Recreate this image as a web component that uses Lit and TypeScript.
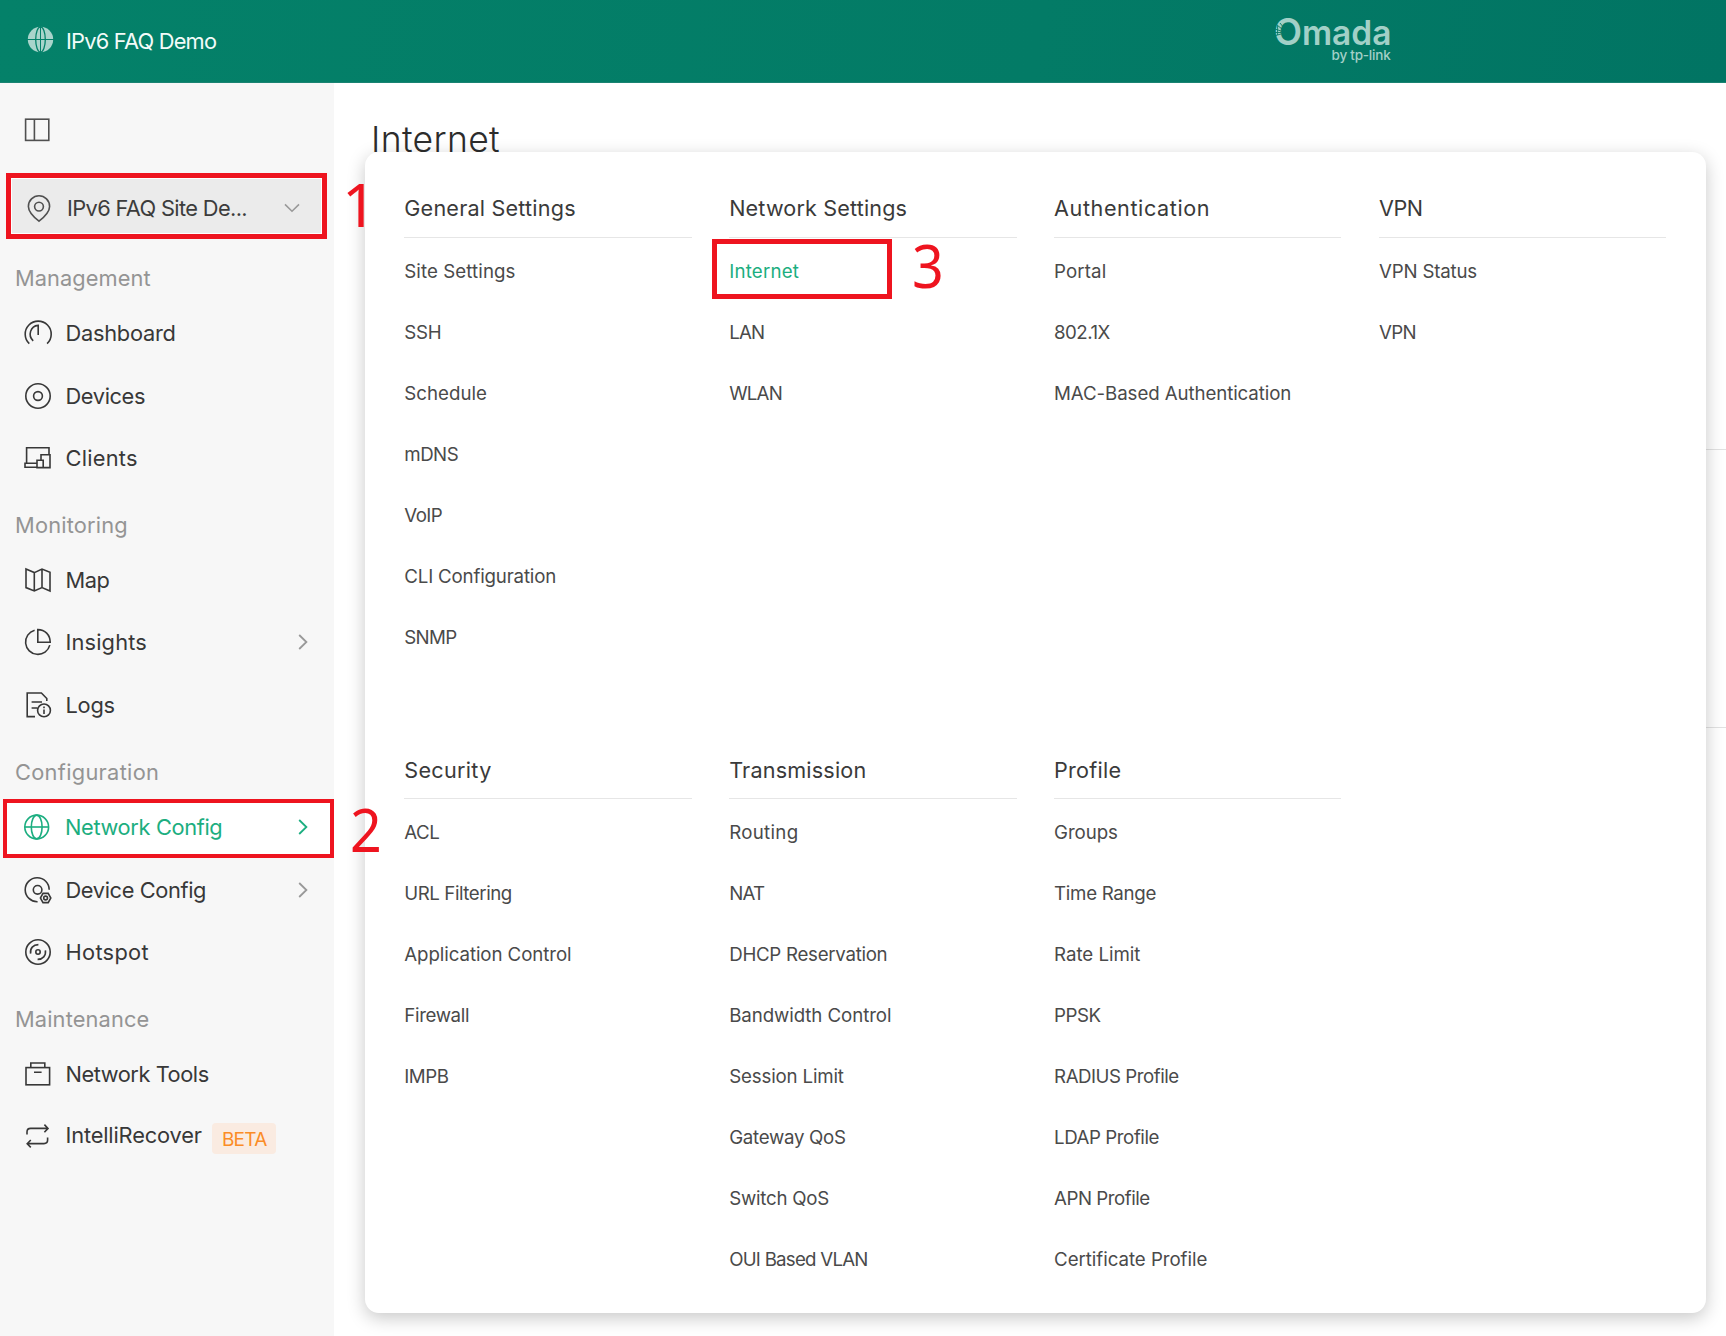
import { LitElement, html, svg, css, nothing } from "lit";
import { customElement, property } from "lit/decorators.js";
import { classMap } from "lit/directives/class-map.js";

// Icons share a 30x30 grid centred on (15, 15).
const ICONS: Record<string, unknown> = {
  panel: svg`<rect x="3.6" y="4.2" width="23.2" height="21.2"/><path d="M12.4 4.2v21.2"/>`,
  pin: svg`<path d="M15 28.2C10.5 24.6 4.4 19.4 4.4 13.4a10.6 10.6 0 0 1 21.2 0c0 6-6.1 11.2-10.6 14.8z"/><circle cx="15" cy="13.6" r="4.4"/>`,
  dashboard: svg`<path d="M6.3 25.6a13 13 0 1 1 17.8 0"/><path d="M10.2 22.8C4.5 17.5 7.3 8.1 15.2 7.4v9.6"/>`,
  devices: svg`<circle cx="15" cy="15" r="12.2"/><circle cx="15" cy="15" r="4.4"/>`,
  clients: svg`<path d="M26 11V4.8H3.6v15.5M13.8 20.3H2v4h12M14 24.6v-7.4h6.2v7.4zM18 17.2v-5.4h9v12.8h-6.8"/>`,
  map: svg`<path d="M3 4l8.3 3.6L19 4l8 3.3v18.8L19 22.6l-7.7 3.4L3 22.6zM11.3 7.6V26M19 4v18.6"/>`,
  insights: svg`<path d="M11.6 3.2a12.3 12.3 0 1 0 15.2 14.9"/><path d="M14.8 2.6c7.2 0 12.3 5.2 12.4 12.7H14.8z"/>`,
  logs: svg`<path d="M12 26.6H4.2V3h14.2l5.4 5.5v2.4M8.6 12H19M8.6 18h5.6"/><circle cx="21" cy="20.4" r="6.4"/><path d="M21 19.4v4.6M21 16.6v1.6"/>`,
  globe: svg`<circle cx="14.7" cy="15" r="11.9"/><ellipse cx="14.7" cy="15" rx="5.4" ry="11.9"/><path d="M2.8 15h23.8"/>`,
  deviceConfig: svg`<path d="M14.6 26.7A12 12 0 1 1 26.2 14.8"/><circle cx="14.6" cy="14.8" r="4.3"/><path d="M20 18.4h5.2l2.6 4.6-2.6 4.6H20L17.4 23z"/><circle cx="22.6" cy="23" r="1.9"/>`,
  hotspot: svg`<circle cx="15" cy="15" r="12.2"/><circle cx="15" cy="15" r="2.2"/><path d="M7.6 16.6c-.8-5.2 2.6-9 7.8-9M22.4 13.4c.8 5.2-2.6 9-7.8 9"/>`,
  tools: svg`<rect x="3" y="8.6" width="23.6" height="17.2"/><path d="M7.8 8.6V4h14v4.6M11 13.2h7.6"/>`,
  recover: svg`<path d="M4 13.6V11c0-2.3 1.3-3.6 3.6-3.6h17M21.4 3.6l3.6 3.8-3.6 3.8M24.6 16.4V19c0 2.3-1.3 3.6-3.6 3.6H4.2M7.8 19l-3.6 3.7 3.6 3.7"/>`,
};

// A label together with the width its text is tracked to.
type Label = [text: string, width: number];

interface NavItem {
  label: Label;
  icon: string;
  arrow?: boolean;
  active?: boolean;
  tag?: string;
}

const NAV: { title: Label; items: NavItem[] }[] = [
  {
    title: ["Management", 135.6],
    items: [
      { label: ["Dashboard", 110.2], icon: "dashboard" },
      { label: ["Devices", 79.6], icon: "devices" },
      { label: ["Clients", 72.2], icon: "clients" },
    ],
  },
  {
    title: ["Monitoring", 112.9],
    items: [
      { label: ["Map", 44], icon: "map" },
      { label: ["Insights", 81.4], icon: "insights", arrow: true },
      { label: ["Logs", 49.3], icon: "logs" },
    ],
  },
  {
    title: ["Configuration", 144.2],
    items: [
      { label: ["Network Config", 157.4], icon: "globe", arrow: true, active: true },
      { label: ["Device Config", 140.6], icon: "deviceConfig", arrow: true },
      { label: ["Hotspot", 83.4], icon: "hotspot" },
    ],
  },
  {
    title: ["Maintenance", 134.4],
    items: [
      { label: ["Network Tools", 143.2], icon: "tools" },
      { label: ["IntelliRecover", 136.3], icon: "recover", tag: "BETA" },
    ],
  },
];

const MENU: { title: Label; items: Label[] }[] = [
  {
    title: ["General Settings", 171.5],
    items: [["Site Settings", 111.2], ["SSH", 37], ["Schedule", 82.6], ["mDNS", 53.8], ["VoIP", 37.8], ["CLI Configuration", 151.8], ["SNMP", 52.2]],
  },
  { title: ["Network Settings", 178], items: [["Internet", 70], ["LAN", 35], ["WLAN", 52.8]] },
  { title: ["Authentication", 156], items: [["Portal", 52.2], ["802.1X", 55.6], ["MAC-Based Authentication", 237.2]] },
  { title: ["VPN", 43.5], items: [["VPN Status", 98], ["VPN", 36.8]] },
  {
    title: ["Security", 87.3],
    items: [["ACL", 35], ["URL Filtering", 107.6], ["Application Control", 167.2], ["Firewall", 64.8], ["IMPB", 44.2]],
  },
  {
    title: ["Transmission", 137.2],
    items: [
      ["Routing", 69.2], ["NAT", 35], ["DHCP Reservation", 158.2], ["Bandwidth Control", 162.2],
      ["Session Limit", 114.6], ["Gateway QoS", 116.5], ["Switch QoS", 99.8], ["OUI Based VLAN", 138.5],
    ],
  },
  {
    title: ["Profile", 67.2],
    items: [
      ["Groups", 63.8], ["Time Range", 102], ["Rate Limit", 86.2], ["PPSK", 46.6],
      ["RADIUS Profile", 124.7], ["LDAP Profile", 104.9], ["APN Profile", 95.6], ["Certificate Profile", 153.2],
    ],
  },
];

@customElement("line-icon")
export class LineIcon extends LitElement {
  @property() name = "";
  static styles = css`
    :host { display: block; flex: none; width: 30px; height: 30px; }
    .glyph { display: block; fill: none; stroke: currentColor; stroke-width: 1.6; }
  `;
  render() {
    return html`<svg class="glyph" width="30" height="30" viewBox="0 0 30 30">${ICONS[this.name]}</svg>`;
  }
}

// Spreads its tracking evenly so that the text takes up the given width.
@customElement("fit-text")
export class FitText extends LitElement {
  @property() text = "";
  @property({ type: Number }) width = 0;
  static styles = css`
    :host { display: inline-block; white-space: nowrap; }
    .text { display: inline-block; letter-spacing: 0; }
  `;
  updated() {
    const el = this.renderRoot.querySelector<HTMLElement>(".text")!;
    el.style.letterSpacing = "0px";
    const natural = el.getBoundingClientRect().width;
    el.style.letterSpacing = `${(this.width - natural) / this.text.length}px`;
  }
  render() {
    return html`<span class="text">${this.text}</span>`;
  }
}

const fit = ([text, width]: Label) => html`<fit-text .text=${text} .width=${width}></fit-text>`;

@customElement("top-bar")
export class TopBar extends LitElement {
  static styles = css`
    :host { display: block; flex: none; }
    .bar { box-sizing: border-box; height: 83px; display: flex; align-items: center; padding: 0 335.5px 0 27px;
      background: linear-gradient(100deg, #048169 0%, #037b66 60%, #017463 100%); border-bottom: 1px solid #1a8372; }
    .globe { display: block; margin-top: -3px; }
    .name { margin-left: 12px; margin-top: -1px; font-size: 21.8px; line-height: 30px; color: #f3fbf9; }
    .logo { margin-left: auto; display: flex; flex-direction: column; align-items: flex-end; color: #a2d0c7; position: relative; margin-top: -5px; }
    .word { font-size: 33.5px; font-weight: 600; line-height: 34px; letter-spacing: 0; white-space: nowrap; margin-right: -1px; }
    .big { font-size: 36.5px; line-height: 30px; letter-spacing: 0; }
    .by { font-size: 13.5px; line-height: 14px; font-weight: 500; margin-top: -2px; }
    .dots { position: absolute; left: 0; top: 4px; }
  `;
  render() {
    return html`<div class="bar">
      <svg class="globe" width="27" height="27" viewBox="0 0 27 27" fill="none">
        <circle cx="13.5" cy="13.5" r="12.7" fill="#a9d4cb" />
        <ellipse cx="13.5" cy="13.5" rx="4.8" ry="12.7" stroke="#048069" stroke-width="1.3" />
        <path d="M0 13.5h27M13.5 0v27" stroke="#048069" stroke-width="1" />
      </svg>
      <span class="name">${fit(["IPv6 FAQ Demo", 150.2])}</span>
      <div class="logo">
        <span class="word"><span class="big">O</span>mada</span>
        <span class="by">${fit(["by tp-link", 59])}</span>
        <svg class="dots" width="12" height="22" viewBox="0 0 12 22" stroke="#037967" stroke-width="0.9">
          <path d="M0 16l7-2M0 12.5h7M1 9l6 2M3 5l5 4M6 3l4 5M3.6 6v9" fill="none" />
        </svg>
      </div>
    </div>`;
  }
}

@customElement("side-nav")
export class SideNav extends LitElement {
  static styles = css`
    :host { display: block; flex: none; }
    .nav { width: 334px; height: 100%; background: #f7f7f7; color: #383838; font-size: 21.8px; font-weight: 370; }
    .toggle { height: 90px; box-sizing: border-box; padding: 32px 0 0 22px; color: #505050; }
    .site { box-sizing: border-box; margin-left: 6px; width: 320.5px; height: 66px; border: 5px solid #ee141f; background: #ebebeb;
      display: flex; align-items: center; padding: 3px 22px 0 13px; color: #505050; box-shadow: inset 0 0 0 1px #fff; }
    .site-name { flex: 1; margin-left: 13px; color: #3c3c3c; white-space: nowrap; }
    .group-title { height: 59.6px; box-sizing: border-box; padding: 12px 0 0 15px; display: flex; align-items: center; color: #949494; }
    .first { margin-top: 3.4px; }
    .item { height: 62.4px; display: flex; align-items: center; padding: 0 26px 0 22.5px; }
    .item.active { box-sizing: border-box; height: 59.4px; margin: 3.3px 0 0.2px 3px; padding: 0 22px 2.5px 15px; border: 4.6px solid #ee141f; background: #fff; color: #1cae80; font-weight: 400; }
    .label { margin-left: 13px; line-height: 30px; white-space: nowrap; }
    .tagged { margin-top: -3px; }
    .arrow { display: block; margin-left: auto; color: #999; }
    .active .arrow { color: #1cae80; }
    .tag { margin-left: 10.5px; margin-top: 4px; width: 64px; height: 31px; border-radius: 4px; background: #faebe1; color: #fb8c26;
      font-size: 19px; font-weight: 400; line-height: 33px; text-align: center; letter-spacing: -0.7px; }
  `;
  render() {
    return html`<nav class="nav">
      <div class="toggle"><line-icon name="panel"></line-icon></div>
      <div class="site">
        <line-icon name="pin"></line-icon>
        <span class="site-name">${fit(["IPv6 FAQ Site De...", 180])}</span>
        <svg width="16" height="10" viewBox="0 0 16 10" fill="none" stroke="#999" stroke-width="1.6"><path d="M1 1.4l7 6.8 7-6.8" /></svg>
      </div>
      ${NAV.map(
        (g, i) => html`<div class=${classMap({ "group-title": true, first: i === 0 })}>${fit(g.title)}</div>
          ${g.items.map(
            (it) => html`<div class=${classMap({ item: true, active: !!it.active })}>
              <line-icon name=${it.icon}></line-icon>
              <span class=${classMap({ label: true, tagged: !!it.tag })}>${fit(it.label)}</span>
              ${it.tag ? html`<span class="tag">${it.tag}</span>` : nothing}
              ${it.arrow
                ? html`<svg class="arrow" width="10" height="16" viewBox="0 0 10 16" fill="none" stroke="currentColor" stroke-width="1.8"><path d="M1.2 1l7.2 7-7.2 7" /></svg>`
                : nothing}
            </div>`,
          )}`,
      )}
    </nav>`;
  }
}

@customElement("mega-menu")
export class MegaMenu extends LitElement {
  static styles = css`
    :host { display: block; }
    .menu { box-sizing: border-box; width: 1340.5px; height: 1161px; padding: 34px 38px 0 39.3px; border-radius: 14px; background: #fff;
      box-shadow: 0 5px 18px rgba(0, 0, 0, 0.22); display: grid; grid-template-columns: repeat(4, 287.4px); column-gap: 37.5px;
      grid-template-rows: 561.8px 1fr; }
    .title { height: 51.6px; box-sizing: border-box; padding-top: 7px; border-bottom: 1.6px solid #e6e6e6; font-size: 21.6px; line-height: 30px;
      color: #3a3a3a; margin-bottom: 3px; }
    .entry { height: 61px; display: flex; align-items: center; font-size: 18.7px; font-weight: 370; color: #4a4a4a; }
    .mark { color: #1cae80; }
    .spot { position: relative; }
    .frame { position: absolute; left: -16.8px; top: -1.6px; width: 180px; height: 60px; box-sizing: border-box; border: 5px solid #ee141f; }
  `;
  render() {
    return html`<div class="menu">
      ${MENU.map(
        (c) => html`<section>
          <div class="title">${fit(c.title)}</div>
          ${c.items.map((t) =>
            t[0] === "Internet"
              ? html`<div class="entry mark spot">${fit(t)}<span class="frame"></span></div>`
              : html`<div class="entry">${fit(t)}</div>`,
          )}
        </section>`,
      )}
    </div>`;
  }
}

@customElement("app-root")
export class AppRoot extends LitElement {
  static styles = css`
    :host { display: block; }
    .app { position: relative; width: 1726px; height: 1336px; overflow: hidden; display: flex; flex-direction: column; background: #fff;
      font-family: Inter, "Open Sans", sans-serif; font-weight: 400; }
    .body { flex: 1; display: flex; min-height: 0; }
    .main { flex: 1; display: flex; flex-direction: column; }
    .page-title { height: 365.5px; box-sizing: border-box; padding: 34px 0 0 37px; font-size: 35.5px; font-weight: 300; line-height: 46px; color: #2c2c2c; }
    .block { height: 277px; margin-left: 1340px; border-top: 1.5px solid #e2e2e2; }
    .menu { position: absolute; left: 365px; top: 152px; }
    .step { position: absolute; font-family: "Noto Sans", "Open Sans", sans-serif; font-size: 61px; line-height: 61px; color: #ee141f; }
    .one { left: 342px; top: 173px; }
    .two { left: 350px; top: 798px; transform: scaleX(0.91); transform-origin: left; }
    .three { left: 912px; top: 234px; transform: scaleX(0.91); transform-origin: left; }
  `;
  render() {
    return html`<div class="app">
      <top-bar></top-bar>
      <div class="body">
        <side-nav></side-nav>
        <main class="main">
          <div class="page-title">${fit(["Internet", 129])}</div>
          <div class="block"></div>
          <div class="block"></div>
        </main>
      </div>
      <mega-menu class="menu"></mega-menu>
      <span class="step one">1</span>
      <span class="step two">2</span>
      <span class="step three">3</span>
    </div>`;
  }
}
